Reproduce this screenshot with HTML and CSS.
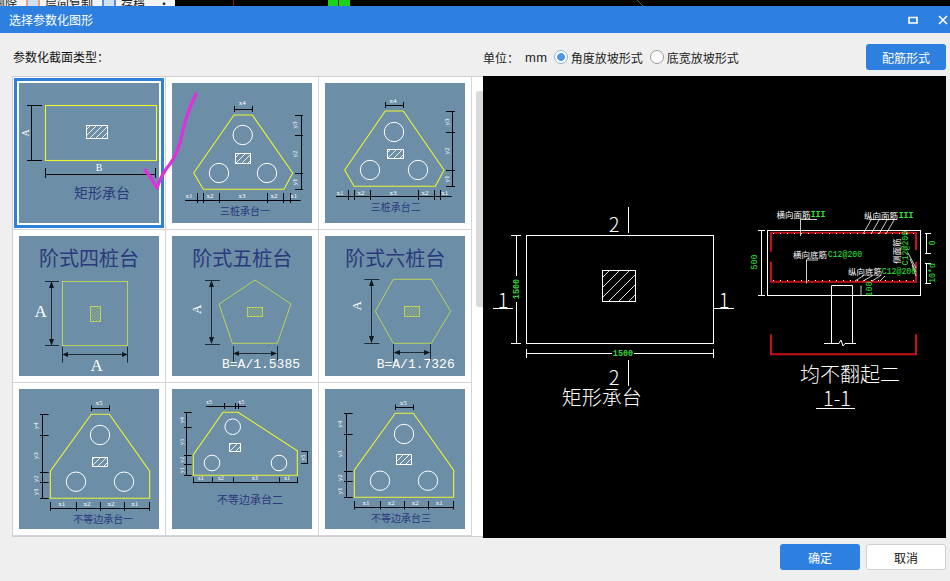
FILE: index.html
```html
<!DOCTYPE html>
<html lang="zh-CN">
<head>
<meta charset="utf-8">
<title>选择参数化图形</title>
<link rel="stylesheet" href="styles.css">
</head>
<body>
<div class="app">
  <div class="backdrop">
    <div class="ribbon">
      <span class="rib-text first">删除</span>
      <span class="rib-icon"></span>
      <span class="rib-text">层间复制</span>
      <span class="rib-icon small"></span>
      <span class="rib-text">存档</span>
      <span class="rib-more">···</span>
    </div>
    <div class="cad-strip">
      <svg class="strip-art" width="775" height="6" viewBox="175 0 775 6">
        <path class="strip-red" d="M238.5 0V6M343.5 0V6"/>
        <rect class="strip-green" x="333" y="0" width="22" height="6"/>
        <path class="strip-red" d="M343.5 0V6"/>
        <path class="strip-line" d="M642 0L648 6"/>
      </svg>
    </div>
  </div>

  <div class="dialog">
    <header class="titlebar">
      <span class="title">选择参数化图形</span>
      <div class="win-btns">
        <svg class="win-icon" width="10" height="8" viewBox="0 0 10 8"><path class="win-stroke" d="M1 1.5H9V7H1Z"/></svg>
        <svg class="win-icon" width="10" height="10" viewBox="0 0 10 10"><path class="win-stroke" d="M1 1L9 9M9 1L1 9"/></svg>
      </div>
    </header>

    <div class="toolbar">
      <span class="tool-label">参数化截面类型：</span>
      <div class="options">
        <span>单位：</span>
        <span class="unit">mm</span>
        <span class="radio checked"></span>
        <span>角度放坡形式</span>
        <span class="radio"></span>
        <span>底宽放坡形式</span>
      </div>
      <button class="btn primary">配筋形式</button>
    </div>

    <main class="content">
      <section class="picker">
        <div class="grid">
          <div class="cell"><div class="thumb selected">
            <svg viewBox="0 0 140 140" class="pic">
              <defs>
                <pattern id="hw" width="6" height="6" patternUnits="userSpaceOnUse"><path class="hatch" d="M-1 7L7 -1M-1 1L1 -1M5 7L7 5"/></pattern>
                <pattern id="hy" width="3" height="3" patternUnits="userSpaceOnUse"><path class="hatch-y" d="M-1 4L4 -1"/></pattern>
                <pattern id="hc" width="10" height="10" patternUnits="userSpaceOnUse"><path class="hatch" d="M-1 11L11 -1M-1 1L1 -1M9 11L11 9"/></pattern>
              </defs>
              <rect class="yl" x="26.5" y="22.5" width="111" height="55"/>
              <path class="k" d="M12.5 22V77M8 22.5H23M8 77.5H23M26 91.5H136M26.5 85V95M136.5 85V95"/>
              <rect class="wh" x="67.5" y="42.5" width="21" height="13" fill="url(#hw)"/>
              <text class="lab big-lab" transform="translate(6 50) rotate(-90)">A</text>
              <text class="lab big-lab" x="80" y="84">B</text>
              <text class="cn" x="83" y="109" font-size="14">矩形承台</text>
            </svg>
          </div></div>

          <div class="cell"><div class="thumb">
            <svg viewBox="0 0 140 140" class="pic">
              <polygon class="yl" points="62,32 80.3,32 120.7,90 112,106.3 31.3,106.3 21.7,90"/>
              <circle class="cw" cx="70.7" cy="52" r="9.7"/><circle class="cw" cx="47" cy="90" r="9.7"/><circle class="cw" cx="95" cy="90" r="9.7"/>
              <rect class="wh" x="63.5" y="70.5" width="15" height="10" fill="url(#hw)"/>
              <path class="k" d="M62.5 26.5H80M62.5 23V29M80.5 23V29M129.5 32V106M123 32.5H131M123 52.5H131M123 90.5H131M123 106.5H131M13 117.5H128.7M25.5 110V120M31.5 110V120M47.5 110V120M95.5 110V120M111.5 110V120M118.5 110V120"/>
              <text class="lab" x="70.3" y="20">x4</text>
              <text class="lab" transform="translate(123 42) rotate(-90)">y3</text>
              <text class="lab" transform="translate(123 71) rotate(-90)">y2</text>
              <text class="lab" transform="translate(123 99) rotate(-90)">y1</text>
              <text class="lab" x="17" y="112.7">x1</text><text class="lab" x="38" y="112.7">x2</text><text class="lab" x="70" y="112.7">x3</text><text class="lab" x="102" y="112.7">x2</text><text class="lab" x="121.7" y="112.7">x1</text>
              <text class="cn" x="73" y="127" font-size="10">三桩承台一</text>
            </svg>
          </div></div>

          <div class="cell"><div class="thumb">
            <svg viewBox="0 0 140 140" class="pic">
              <polygon class="yl" points="60.3,28 78.3,28 119,87 110.3,103.3 29,103.3 19.7,87"/>
              <circle class="cw" cx="69" cy="49" r="9.7"/><circle class="cw" cx="45" cy="87" r="9.7"/><circle class="cw" cx="93" cy="87" r="9.7"/>
              <rect class="wh" x="62.5" y="66.5" width="16" height="9" fill="url(#hw)"/>
              <path class="k" d="M60.5 22.5H78.3M60.5 19V25M78.5 19V25M127.5 28.7V103.3M121 28.5H130M121 49.5H130M121 87.5H130M121 103.5H130M11 113.5H126.7M23.5 107V117M29.5 107V117M45.5 107V117M93.5 107V117M109.5 107V117M115.5 107V117"/>
              <text class="lab" x="68" y="17.7">x4</text>
              <text class="lab" transform="translate(122 39) rotate(-90)">y3</text>
              <text class="lab" transform="translate(122 68) rotate(-90)">y2</text>
              <text class="lab" transform="translate(122 96) rotate(-90)">y1</text>
              <text class="lab" x="15" y="109.7">x1</text><text class="lab" x="36" y="109.7">x2</text><text class="lab" x="68" y="109.7">x3</text><text class="lab" x="100" y="109.7">x2</text><text class="lab" x="119.7" y="109.7">x1</text>
              <text class="cn" x="70.7" y="123.7" font-size="10">三桩承台二</text>
            </svg>
          </div></div>

          <div class="cell"><div class="thumb">
            <svg viewBox="0 0 140 140" class="pic">
              <text class="cn" x="70" y="21" font-size="20">阶式四桩台</text>
              <rect class="gy" x="43.5" y="45.5" width="65" height="64"/>
              <rect class="gy-h" x="71.5" y="70.5" width="10" height="15" fill="url(#hy)"/>
              <path class="d" d="M32.5 47V108M26 45.5H40M26 109.5H40M45 118.5H107M43.5 110.7V126.7M108.5 110.7V126.7"/>
              <path class="arrow" d="M32.5 45L30 52H35ZM32.5 109.7L30 103H35ZM43.3 118.5L49 116V121ZM108.7 118.5L103 116V121Z"/>
              <text class="serif" x="21.7" y="75" font-size="17">A</text>
              <text class="serif" x="77.7" y="129" font-size="17">A</text>
            </svg>
          </div></div>

          <div class="cell"><div class="thumb">
            <svg viewBox="0 0 140 140" class="pic">
              <text class="cn" x="70.3" y="21" font-size="20">阶式五桩台</text>
              <polygon class="gy" points="83,44 119,68 105.3,107.3 60.3,107.3 47,68"/>
              <rect class="gy-h" x="75.5" y="71.5" width="15" height="9" fill="url(#hy)"/>
              <path class="d" d="M39.5 46V106M33 44.5H48M33 108.5H48M63 117.5H103M61.5 110V126M105.5 110V126"/>
              <path class="arrow" d="M39.5 44.3L37 51H42ZM39.5 108L37 101H42ZM61 117.5L67 115V120ZM105 117.5L99 115V120Z"/>
              <text class="serif" transform="translate(24.7 73.3) rotate(-90)" font-size="13">A</text>
              <text class="mono" x="89" y="128">B=A/1.5385</text>
            </svg>
          </div></div>

          <div class="cell"><div class="thumb">
            <svg viewBox="0 0 140 140" class="pic">
              <text class="cn" x="70.3" y="21" font-size="20">阶式六桩台</text>
              <polygon class="gy" points="68.3,43.3 106.3,43.3 125.7,75.3 106.3,107.3 68.3,107.3 50.3,75.3"/>
              <rect class="gy-h" x="79.5" y="70.5" width="15" height="10" fill="url(#hy)"/>
              <path class="d" d="M46.5 45V106M39.3 43.5H54.3M39.3 107.5H54.3M70 116.5H104M68.5 108V125M105.5 108V125"/>
              <path class="arrow" d="M46.5 43.3L44 50H49ZM46.5 107.3L44 100H49ZM68.7 116.5L75 114V119ZM105.3 116.5L99 114V119Z"/>
              <text class="serif" transform="translate(31 69.7) rotate(-90)" font-size="13">A</text>
              <text class="mono" x="90.7" y="128">B=A/1.7326</text>
            </svg>
          </div></div>

          <div class="cell"><div class="thumb">
            <svg viewBox="0 0 140 140" class="pic">
              <polygon class="yl" points="72.3,25.3 90.3,25.3 130.7,82.3 130.7,109.3 31.3,109.3 31.3,82.3"/>
              <circle class="cw" cx="81" cy="46" r="9.7"/><circle class="cw" cx="57" cy="92.7" r="9.7"/><circle class="cw" cx="105" cy="92.7" r="9.7"/>
              <rect class="wh" x="73.5" y="68.5" width="15" height="9" fill="url(#hw)"/>
              <path class="k" d="M72.5 19.5H90.3M72.5 16.5V22M90.5 16.5V22M23.5 25.3V109.3M21 25.5H29.7M21 46.5H29.7M21 83.5H29.7M21 93.5H29.7M21 109.5H29.7M31.7 119.5H130.7M31.5 113V121.7M57.5 113V121.7M81.5 113V121.7M105.5 113V121.7M130.5 113V121.7"/>
              <text class="lab" x="80" y="14.3">x5</text>
              <text class="lab" transform="translate(17 36.7) rotate(-90)">y4</text>
              <text class="lab" transform="translate(17 66.7) rotate(-90)">y3</text>
              <text class="lab" transform="translate(17 89.7) rotate(-90)">y2</text>
              <text class="lab" transform="translate(17 102.7) rotate(-90)">y1</text>
              <text class="lab" x="42.7" y="115">x1</text><text class="lab" x="68" y="115">x2</text><text class="lab" x="92" y="115">x2</text><text class="lab" x="115.7" y="115">x1</text>
              <text class="cn" x="84.3" y="129.3" font-size="10">不等边承台一</text>
            </svg>
          </div></div>

          <div class="cell"><div class="thumb">
            <svg viewBox="0 0 140 140" class="pic">
              <polygon class="yl" points="51,23.3 66,23.3 125.3,61.7 125.3,86.3 21.3,86.3 21.3,65.7"/>
              <circle class="cw" cx="60.7" cy="37.7" r="7.8"/><circle class="cw" cx="40" cy="74" r="7.8"/><circle class="cw" cx="107" cy="74" r="7.8"/>
              <rect class="wh" x="57.5" y="54.5" width="11" height="8" fill="url(#hw)"/>
              <path class="k" d="M34 17.5H74M52.5 14V20M63.5 14V20M66.5 14V20M14.5 23.3V86.3M12 23.5H19.7M12 38.5H19.7M12 66.5H19.7M12 75.5H19.7M12 86.5H19.7M135.5 62.3V74.3M129.3 62.5H136.3M129.3 74.5H136.3M21.3 93.5H125.3M21.5 88.3V94.3M40.5 88.3V94.3M61.5 88.3V94.3M107.5 88.3V94.3M125.5 88.3V94.3"/>
              <text class="lab tiny" x="37" y="13.3">x5</text><text class="lab tiny" x="69.3" y="13.3">x5</text>
              <text class="lab tiny" transform="translate(10.3 31) rotate(-90)">y4</text>
              <text class="lab tiny" transform="translate(10.3 53) rotate(-90)">y3</text>
              <text class="lab tiny" transform="translate(10.3 70.7) rotate(-90)">y2</text>
              <text class="lab tiny" transform="translate(10.3 81) rotate(-90)">y1</text>
              <text class="lab tiny" transform="translate(130.7 68.7) rotate(-90)">y5</text>
              <text class="lab tiny" x="28.7" y="89.3">x1</text><text class="lab tiny" x="48.7" y="89.3">x2</text><text class="lab tiny" x="82.7" y="89.3">x3</text><text class="lab tiny" x="115" y="89.3">x1</text>
              <text class="cn" x="78" y="110.3" font-size="11">不等边承台二</text>
            </svg>
          </div></div>

          <div class="cell"><div class="thumb">
            <svg viewBox="0 0 140 140" class="pic">
              <polygon class="yl" points="70.3,24.3 88.3,24.3 128.7,81.3 128.7,108.3 29.3,108.3 29.3,81.3"/>
              <circle class="cw" cx="79" cy="45" r="9.7"/><circle class="cw" cx="55" cy="91.7" r="9.7"/><circle class="cw" cx="103" cy="91.7" r="9.7"/>
              <rect class="wh" x="71.5" y="65.5" width="15" height="10" fill="url(#hw)"/>
              <path class="k" d="M70.5 18.5H88.3M70.5 15.5V21M88.5 15.5V21M21.5 24.3V108.3M19 24.5H27.7M19 45.5H27.7M19 82.5H27.7M19 92.5H27.7M19 108.5H27.7M29.7 118.5H128.7M29.5 112V120.5M55.5 112V120.5M79.5 112V120.5M103.5 112V120.5M128.5 112V120.5"/>
              <text class="lab" x="78.3" y="13.7">x5</text>
              <text class="lab" transform="translate(15 35.3) rotate(-90)">y4</text>
              <text class="lab" transform="translate(15 65) rotate(-90)">y3</text>
              <text class="lab" transform="translate(15 88.7) rotate(-90)">y2</text>
              <text class="lab" transform="translate(15 102) rotate(-90)">y1</text>
              <text class="lab" x="41" y="113.7">x1</text><text class="lab" x="66.3" y="113.7">x2</text><text class="lab" x="90.3" y="113.7">x2</text><text class="lab" x="114.3" y="113.7">x1</text>
              <text class="cn" x="76" y="128.3" font-size="10">不等边承台三</text>
            </svg>
          </div></div>
        </div>
        <div class="scrollbar"><div class="scroll-thumb"></div></div>
      </section>

      <section class="preview">
        <svg class="cad" viewBox="483 76 463 462">
          <!-- plan -->
          <rect class="cad-w" x="526.5" y="235.5" width="187" height="108"/>
          <rect class="cad-h" x="602.5" y="270.5" width="33" height="31" fill="url(#hc)"/>
          <path class="cad-w" d="M628.5 207V233M628.5 360V386M493 308.5H513M714 308.5H734M516.5 235V343M511 235.5H521M511 343.5H521M526 353.5H713M526.5 349V358M713.5 349V358"/>
          <text class="cad-t" x="614" y="223" font-size="20">2</text>
          <text class="cad-t" x="614" y="376" font-size="20">2</text>
          <text class="cad-t" x="503" y="299" font-size="20">1</text>
          <text class="cad-t" x="724" y="299" font-size="20">1</text>
          <rect class="cad-bg" x="510" y="276" width="13" height="26"/>
          <rect class="cad-bg" x="612" y="348" width="22" height="12"/>
          <text class="cad-g" transform="translate(516.7 289) rotate(-90)">1500</text>
          <text class="cad-g" x="623" y="354">1500</text>
          <text class="cad-t" x="601.7" y="396.7" font-size="20">矩形承台</text>

          <!-- section -->
          <path class="cad-red" d="M771 251.7V232.7H916V250M771 261.7V281.7H916V262"/>
          <path class="cad-dots" d="M773 280.5H914M773 233.5H914"/>
          <path class="cad-red" d="M771 334.3V354.3H916V334.3"/>
          <rect class="cad-w" x="767.5" y="230.5" width="153" height="65"/>
          <path class="cad-w" d="M831.5 343V285.5H852.5V343M824 343.5H839L841 340L843 346L845 343.5H856"/>
          <path class="cad-w" d="M758 230.5H765M758 295.5H765M761.5 230.5V295.5M925 233.5H931M925 253.5H931M925 263.5H931M925 283.5H931M926.5 233.5V253.5M926.5 263.5V283.5"/>
          <path class="cad-thin" d="M817 219.5H800.5V236M869.5 219.5H897M863 234L871 220M871 234L879 220M879 234L887 220M886 234L894 220M806 260H818M806.5 260V283.5M855 281L863 276M863 281L872 276M872 281L880 276M880 281L885 276M908 253L916 268M910 259L916 272M912 265L916 276M861 285.5V295"/>
          <text class="cad-s" x="793.5" y="214">横向面筋</text>
          <text class="cad-gs heavy" x="818" y="214">III</text>
          <text class="cad-s" x="881" y="215">纵向面筋</text>
          <text class="cad-gs heavy" x="906" y="215">III</text>
          <text class="cad-s" x="810" y="254">横向底筋</text>
          <text class="cad-gs" x="845" y="254">C12@200</text>
          <text class="cad-s" x="865" y="271">纵向底筋</text>
          <text class="cad-gs" x="899" y="271">C12@200</text>
          <text class="cad-s" transform="translate(896 251) rotate(-90)">侧面筋</text>
          <text class="cad-gs" transform="translate(905 248) rotate(-90)">C12@200</text>
          <text class="cad-gs" transform="translate(754 262) rotate(-90)">500</text>
          <text class="cad-gs" transform="translate(932 243) rotate(-90)">0</text>
          <text class="cad-gs" transform="translate(932 273) rotate(-90)">10*d</text>
          <text class="cad-gs" transform="translate(869 289) rotate(-90)">100</text>
          <text class="cad-t" x="850" y="373" font-size="20">均不翻起二</text>
          <text class="cad-t" x="837" y="397" font-size="20">1-1</text>
          <path class="cad-w" d="M816 408.5H855"/>
        </svg>
      </section>
    </main>

    <footer class="footer">
      <button class="btn primary">确定</button>
      <button class="btn plain">取消</button>
    </footer>
  </div>

  <svg class="checkmark" width="60" height="104" viewBox="140 90 60 104">
    <path d="M196 94C190 106 186 118 183 130C180 146 176 156 170 164C165 170 160 178 157 188C153 182 150 175 145 170"/>
  </svg>
</div>
</body>
</html>
```

FILE: styles.css
```css
* { box-sizing: border-box; }
html, body { margin: 0; padding: 0; }
body {
  width: 950px;
  height: 581px;
  overflow: hidden;
  background: #000;
  font-family: "Noto Sans CJK SC", "Noto Sans", sans-serif;
  font-size: 12px;
  color: #1a1a1a;
}
.app { position: relative; width: 950px; height: 581px; overflow: hidden; }

/* cropped window behind the dialog */
.backdrop { display: flex; height: 6px; overflow: hidden; }
.ribbon {
  width: 170px;
  flex: none;
  display: flex;
  align-items: center;
  gap: 5px;
  height: 6px;
  background: #f3f3f3;
  color: #222;
  font-size: 12px;
  white-space: nowrap;
}
.rib-text.first { margin-left: -7px; margin-right: 4px; }
.rib-icon { width: 14px; height: 14px; flex: none; border: 2px solid #e8a37a; background: #cfe0f2; }
.rib-icon.small { border-color: #5b8fd0; margin-left: 4px; }
.rib-more { margin-left: 8px; }
.cad-strip { flex: 1; background: #000; border-left: 5px solid #f7f7f7; }
.strip-art { display: block; margin-left: -5px; }
.strip-green { fill: #19d419; }
.strip-red { fill: none; stroke: #8a1a10; stroke-width: 1; }
.strip-line { fill: none; stroke: #2f7a3a; stroke-width: 1; }

/* dialog */
.dialog {
  height: 575px;
  display: flex;
  flex-direction: column;
  background: #efefef;
}
.titlebar {
  height: 27px;
  flex: none;
  display: flex;
  align-items: center;
  justify-content: space-between;
  background: #2e80e0;
  color: #fff;
  padding: 0 2px 0 9px;
}
.title { font-size: 12px; }
.win-btns { display: flex; align-items: center; gap: 20px; }
.win-icon { display: block; }
.win-stroke { fill: none; stroke: #fff; stroke-width: 1.6; }

.toolbar {
  height: 43px;
  flex: none;
  display: flex;
  align-items: flex-start;
  padding: 11px 4px 0 13px;
}
.tool-label { width: 470px; line-height: 26px; flex: none; font-size: 12px; color: #111; }
.options { flex: 1; display: flex; align-items: center; height: 26px; color: #222; }
.unit { margin-left: 6px; margin-right: 6px; font-family: "Liberation Sans", sans-serif; font-size: 13px; letter-spacing: .5px; }
.radio {
  width: 14px;
  height: 14px;
  flex: none;
  border-radius: 50%;
  border: 1px solid #9a9a9a;
  background: #fff;
  margin-right: 3px;
  margin-left: 7px;
}
.radio.checked { margin-left: 0; background: radial-gradient(circle, #4d95e6 0 3.5px, #fff 4.2px); border-color: #8fb4dc; }

.btn {
  width: 80px;
  height: 26px;
  border-radius: 3px;
  font-family: inherit;
  font-size: 12px;
  padding: 0;
  flex: none;
}
.primary { background: #2e80e0; color: #fff; border: 0; }
.plain { background: #fff; color: #111; border: 1px solid #d0d0d0; }

.content { height: 462px; flex: none; display: flex; padding: 0 4px 0 12px; }
.picker {
  width: 471px;
  height: 461px;
  flex: none;
  display: flex;
  background: #fff;
  border: 1px solid #cfcfd4;
  border-right: 0;
}
.grid { display: grid; grid-template-columns: repeat(3, 153px); grid-auto-rows: 153px; width: 459px; flex: none; }
.cell {
  padding: 6px;
  border-right: 1px solid #d3d5da;
  border-bottom: 1px solid #d3d5da;
}
.thumb { width: 140px; height: 140px; background: #6c8ea6; }
.thumb.selected { outline: 3px solid #2e80d8; outline-offset: 2px; }
.pic { display: block; width: 140px; height: 140px; }
.scrollbar { flex: 1; padding: 14px 0 0 4px; }
.scroll-thumb { height: 216px; background: #dadada; border-radius: 3px 0 0 3px; }

/* thumbnail drawing */
.yl { fill: none; stroke: #eef530; stroke-width: 1.1; }
.gy { fill: none; stroke: #b9d25e; stroke-width: 1; }
.gy-h { stroke: #b9d25e; stroke-width: 1; }
.wh { stroke: #fff; stroke-width: 1; }
.cw { fill: none; stroke: #fff; stroke-width: 1; }
.k { fill: none; stroke: #05080c; stroke-width: 1; }
.d { fill: none; stroke: #1e2c38; stroke-width: 1; }
.arrow { fill: #10181f; stroke: none; }
.hatch { fill: none; stroke: #fff; stroke-width: .9; }
.hatch-y { fill: none; stroke: #a8bd5c; stroke-width: .8; }
.cn, .lab, .serif, .mono, .cad-t, .cad-g, .cad-s, .cad-gs { text-anchor: middle; dominant-baseline: central; }
.cn { fill: #2a3a7c; font-family: "Noto Sans CJK SC", sans-serif; }
.lab { fill: #fff; font-family: "Liberation Serif", serif; font-size: 7px; }
.big-lab { font-size: 10px; }
.tiny { font-size: 6px; }
.serif { fill: #fff; font-family: "Liberation Serif", serif; }
.mono { fill: #fff; font-family: "Liberation Mono", monospace; font-size: 13px; }

/* preview */
.preview { width: 463px; height: 462px; flex: none; background: #000; }
.cad { display: block; width: 463px; height: 462px; }
.cad-w { fill: none; stroke: #fff; stroke-width: 1; }
.cad-h { stroke: #fff; stroke-width: 1; }
.cad-thin { fill: none; stroke: #fff; stroke-width: .8; }
.cad-red { fill: none; stroke: #c8101c; stroke-width: 2; }
.cad-dots { fill: none; stroke: #fff; stroke-width: 1; stroke-dasharray: 1 6; }
.cad-bg { fill: #000; }
.cad-t { fill: #fff; font-family: "Noto Sans CJK SC", sans-serif; font-weight: 300; }
.cad-g { fill: #3ad040; font-family: "Liberation Mono", monospace; font-size: 8.5px; font-weight: 700; }
.cad-s { fill: #fff; font-family: "Noto Sans CJK SC", sans-serif; font-size: 8.5px; }
.cad-gs { fill: #2fe83a; font-family: "Liberation Mono", monospace; font-size: 8.2px; }
.heavy { font-weight: 700; }

.footer {
  flex: 1;
  display: flex;
  justify-content: flex-end;
  gap: 6px;
  padding: 6px 4px 0 0;
}

.checkmark { position: absolute; left: 140px; top: 90px; pointer-events: none; }
.checkmark path { fill: none; stroke: #e030dc; stroke-width: 3.2; stroke-linecap: round; stroke-linejoin: round; }
```
